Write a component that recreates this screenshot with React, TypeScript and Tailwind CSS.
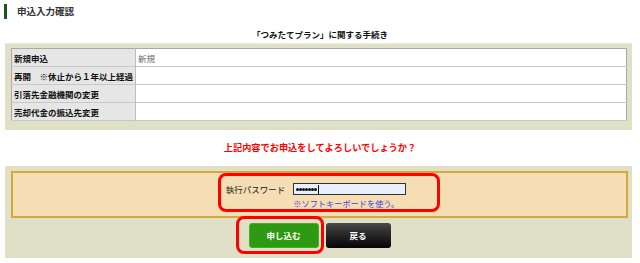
import { useState } from 'react'

const ROWS: { label: string; value: string }[] = [
  { label: '新規申込', value: '新規' },
  { label: '再開　※休止から１年以上経過', value: '' },
  { label: '引落先金融機関の変更', value: '' },
  { label: '売却代金の振込先変更', value: '' },
]

export default function App() {
  const [passwordLength] = useState(7)

  return (
    <div className="relative h-[263px] w-[640px] overflow-hidden bg-white font-['Noto_Sans_CJK_JP','Noto_Sans',sans-serif] text-[#222]">
      {/* page title */}
      <div className="flex h-[19px] items-end pl-[4px]">
        <span className="h-[15px] w-[3px] bg-[#1d561d]" />
        <span className="mb-[2px] ml-[10px] text-[9.5px] leading-[11px] font-bold text-[#333]">
          申込入力確認
        </span>
      </div>

      <p className="mt-[10px] text-center text-[8.5px] leading-[10px] font-bold text-[#111]">
        「つみたてプラン」に関する手続き
      </p>

      {/* summary table */}
      <section className="mt-[4px] ml-[5px] w-[627px] border-t border-[#ececde] bg-[#e0e0c6] pt-[4px] pr-[5px] pb-[9px] pl-[6px]">
        <table className="w-full border-collapse border border-[#a9a9a9] bg-white">
          <tbody>
            {ROWS.map((row) => (
              <tr key={row.label} className="h-[18px] border-b border-[#c8c8c8]">
                <th className="w-[124px] border-r border-[#bdbdbd] bg-[#e6e6e6] px-[2px] text-left text-[8.5px] leading-[10px] font-bold whitespace-nowrap text-[#111]">
                  {row.label}
                </th>
                <td className="px-[2px] text-[8.5px] leading-[10px] text-[#666]">{row.value}</td>
              </tr>
            ))}
          </tbody>
        </table>
      </section>

      <p className="flex h-[36px] items-center justify-center text-[9.2px] font-bold text-[#ff0000]">
        上記内容でお申込をしてよろしいでしょうか？
      </p>

      {/* password + actions */}
      <section className="ml-[5px] h-[92px] w-[627px] bg-[#e0e0c6] pt-[5px] pr-[4px] pl-[6px]">
        <div className="flex h-[47px] justify-center border-2 border-[#d5a83b] bg-[#f5deb3] pt-[10px] pr-[7px]">
          <span className="mt-[1px] text-[8.5px] leading-[10px] text-[#222]">執行パスワード</span>
          <div className="ml-[8px] flex flex-col">
            <div className="flex h-[12px] w-[113px] items-center border border-[#333] bg-[#e8f0fe] pl-[2px]">
              <div className="flex items-center">
                {Array.from({ length: passwordLength }, (_, i) => (
                  <span key={i} className="h-[3px] w-[3px] rounded-full bg-[#111]" />
                ))}
              </div>
              <span className="ml-[1px] h-[9px] w-px bg-[#000]" />
            </div>
            <a className="mt-[3px] cursor-pointer text-[8.2px] leading-[10px] text-[#4b3fe0]">
              ※ソフトキーボードを使う。
            </a>
          </div>
        </div>

        <div className="mt-[5px] flex justify-center gap-[7px]">
          <button
            type="button"
            className="h-[25px] w-[70px] rounded-[3px] border border-[#4aad2a] bg-[#2e9a14] text-[8.5px] font-bold text-white"
          >
            申し込む
          </button>
          <button
            type="button"
            className="h-[25px] w-[65px] rounded-[3px] bg-gradient-to-b from-[#4a4a4a] to-[#060606] text-[8.5px] font-bold text-white"
          >
            戻る
          </button>
        </div>
      </section>

      {/* red highlight annotations */}
      <div className="pointer-events-none absolute top-[173px] left-[218px] h-[39px] w-[222px] rounded-[8px] border-[3px] border-[#ff0000]" />
      <div className="pointer-events-none absolute top-[216px] left-[236px] h-[38px] w-[88px] rounded-[8px] border-[3px] border-[#ff0000]" />
    </div>
  )
}
